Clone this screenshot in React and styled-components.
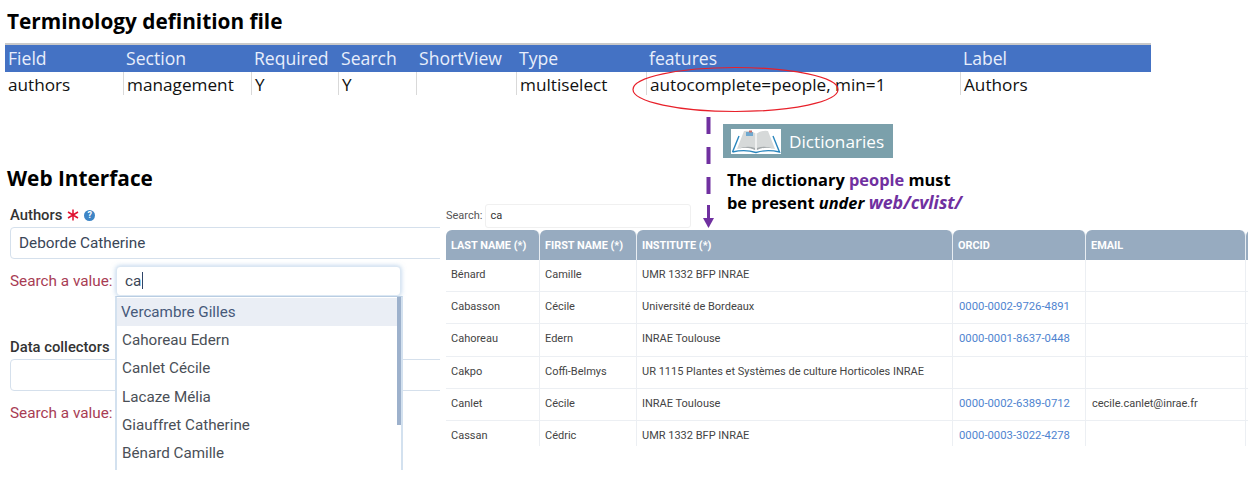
import styled, {createGlobalStyle} from "styled-components";

const GlobalStyle = createGlobalStyle`
    html, body {
        margin: 0;
        padding: 0;
        background: white;
    }
    * {
        box-sizing: border-box;
    }
`;

const Page = styled.div`
    position: relative;
    width: 1248px;
    height: 489px;
    overflow: hidden;
    background: white;
    font-family: Roboto, sans-serif;
`;

const SlideTitle = styled.h2`
    margin: 0;
    height: 43px;
    padding: 6px 0 0 7px;
    font-family: "Open Sans", sans-serif;
    font-size: 20.8px;
    line-height: 30px;
    font-weight: 700;
    color: black;
`;

const Sheet = styled.div`
    margin-left: 5px;
    width: 1146px;
    display: grid;
    grid-template-columns: 118px 128px 87px 78px 100px 130px 314px 191px;
`;

const HeadCell = styled.div`
    height: 29px;
    padding: 0 0 0 3px;
    border-top: 2px solid #c9c9c9;
    background: #4472c4;
    color: #e8eefb;
    font-family: "Open Sans", sans-serif;
    font-size: 17.6px;
    line-height: 26px;
    white-space: nowrap;
`;

const RowCell = styled.div`
    height: 23px;
    padding-left: 3px;
    border-left: ${(props) => (props.$first ? "none" : "1px solid #d9d9d9")};
    color: #111;
    font-family: "Open Sans", sans-serif;
    font-size: 17.2px;
    line-height: 26px;
    white-space: nowrap;
`;

const Lower = styled.div`
    margin-top: 70px;
    display: grid;
    grid-template-columns: 446px 1fr;
`;

const FormColumn = styled.div`
    width: 440px;
    height: 324px;
    padding-left: 7px;
    overflow: hidden;
`;

const SlideHeading = styled(SlideTitle)`
    height: 40px;
    padding: 0;
    margin-top: -2px;
    margin-bottom: 2px;
`;

const Field = styled.div`
    padding-left: 3px;
    margin-top: ${(props) => props.$top || 0}px;
`;

const FieldLabel = styled.div`
    display: flex;
    align-items: center;
    gap: 5px;
    height: 20px;
    margin-bottom: 2px;
    font-size: 14.8px;
    font-weight: 500;
    color: #333;
`;

const RequiredMark = styled.svg`
    width: 12px;
    height: 12px;
    flex: none;
`;

const HelpDot = styled.span`
    width: 11px;
    height: 11px;
    border-radius: 50%;
    background: #3d85c6;
    color: white;
    font-size: 9px;
    line-height: 11px;
    font-weight: 700;
    text-align: center;
`;

const ValueBox = styled.div`
    width: 450px;
    height: 32px;
    padding-left: 8px;
    border: 1px solid #d5e0ec;
    border-radius: 4px;
    color: #3a4657;
    font-size: 15.3px;
    line-height: 30px;
`;

const SearchRow = styled.div`
    position: relative;
    display: flex;
    align-items: center;
    height: 30px;
    margin-top: 7px;
    font-size: 15.3px;
    color: #a83c54;
`;

const SearchInput = styled.div`
    position: absolute;
    left: 106px;
    top: 0;
    width: 285px;
    height: 30px;
    padding-left: 8px;
    border: 1px solid #dbe7f3;
    border-radius: 4px;
    box-shadow: 0 0 5px rgba(120, 165, 215, 0.55);
    color: #3a4657;
    font-size: 15.3px;
    line-height: 29px;
    background: white;
    z-index: 2;
`;

const Caret = styled.span`
    display: inline-block;
    width: 1px;
    height: 17px;
    margin-left: 1px;
    vertical-align: -3px;
    background: #2f4468;
`;

const Dropdown = styled.ul`
    position: absolute;
    left: 105px;
    top: 30px;
    width: 288px;
    height: 174px;
    margin: 0;
    padding: 1px 0 0;
    list-style: none;
    overflow: hidden;
    background: white;
    border-left: 2px solid #d3e1ef;
    border-right: 2px solid #d3e1ef;
    border-top: 1px solid #b9cde2;
    z-index: 3;
`;

const Option = styled.li`
    height: 28.2px;
    padding-left: ${(props) => (props.$active ? "4px" : "5px")};
    background: ${(props) => (props.$active ? "#eaeef5" : "transparent")};
    color: ${(props) => (props.$active ? "#46597a" : "#4a4f57")};
    font-size: 15.2px;
    line-height: 28px;
`;

const ScrollThumb = styled.div`
    position: absolute;
    top: 0;
    right: 0;
    width: 4px;
    height: 128px;
    background: #9db1cc;
`;

const TableColumn = styled.div`
    padding-top: 36px;
    min-width: 0;
`;

const TableSearch = styled.div`
    display: flex;
    align-items: center;
    gap: 3px;
    height: 29px;
    font-size: 11px;
    color: #555;
`;

const TableSearchBox = styled.div`
    width: 206px;
    height: 24px;
    padding-left: 4px;
    border: 1px solid #f0f0f0;
    border-radius: 3px;
    color: #333;
    font-size: 11px;
    line-height: 22px;
`;

const TableClip = styled.div`
    height: 216px;
    overflow: hidden;
`;

const Table = styled.table`
    width: 880px;
    table-layout: fixed;
    border-collapse: separate;
    border-spacing: 0;
    font-size: 11px;
`;

const Th = styled.th`
    height: 30px;
    padding: 0 5px;
    background: #97abc0;
    border-right: 1px solid #e8edf2;
    border-radius: 6px 6px 0 0;
    color: white;
    font-size: 10.9px;
    font-weight: 700;
    text-align: left;
    white-space: nowrap;
`;

const Td = styled.td`
    height: 32.2px;
    padding: 0 5px 2px;
    border-right: 1px solid #eceff3;
    border-bottom: 1px solid #eceff3;
    color: #444;
    white-space: nowrap;
`;

const Orcid = styled.span`
    margin-left: 1px;
    color: #4f84d0;
    font-size: 11.3px;
`;

const Email = styled.span`
    margin-left: 1px;
`;

const Annotation = styled.svg`
    position: absolute;
    left: 0;
    top: 0;
    pointer-events: none;
    z-index: 4;
`;

const Callout = styled.div`
    position: absolute;
    left: 723px;
    top: 124px;
    z-index: 4;
`;

const Banner = styled.div`
    display: flex;
    align-items: center;
    gap: 8px;
    width: 170px;
    height: 34px;
    padding-left: 8px;
    background: #7ba0ab;
    color: white;
    font-family: "Open Sans", sans-serif;
    font-size: 17.2px;
`;

const BookTile = styled.svg`
    width: 50px;
    height: 25px;
    background: white;
`;

const Note = styled.div`
    margin: 10px 0 0 4px;
    font-family: "Open Sans", sans-serif;
    font-size: 16.4px;
    line-height: 23px;
    font-weight: 700;
    color: black;
    white-space: nowrap;
`;

const Purple = styled.span`
    color: #7030a0;
`;

const PurplePath = styled(Purple)`
    font-size: 17.8px;
    font-style: italic;
`;

const sheetHead = ["Field", "Section", "Required", "Search", "ShortView", "Type", "features", "Label"];
const sheetRow = ["authors", "management", "Y", "Y", "", "multiselect", "autocomplete=people, min=1", "Authors"];

const people = ["Vercambre Gilles", "Cahoreau Edern", "Canlet Cécile", "Lacaze Mélia", "Giauffret Catherine", "Bénard Camille"];

const columns = [94, 97, 316, 133, 160, 80];
const tableHead = ["LAST NAME (*)", "FIRST NAME (*)", "INSTITUTE (*)", "ORCID", "EMAIL", ""];
const tableRows = [
    ["Bénard", "Camille", "UMR 1332 BFP INRAE", "", ""],
    ["Cabasson", "Cécile", "Université de Bordeaux", "0000-0002-9726-4891", ""],
    ["Cahoreau", "Edern", "INRAE Toulouse", "0000-0001-8637-0448", ""],
    ["Cakpo", "Coffi-Belmys", "UR 1115 Plantes et Systèmes de culture Horticoles INRAE", "", ""],
    ["Canlet", "Cécile", "INRAE Toulouse", "0000-0002-6389-0712", "cecile.canlet@inrae.fr"],
    ["Cassan", "Cédric", "UMR 1332 BFP INRAE", "0000-0003-3022-4278", ""],
];

function BookIcon() {
    return (
        <BookTile viewBox="0 0 50 25">
            <path d="M1.5 23 L8 7 M1.5 23 Q14 20 25 23.5 Q36 20 48.5 23 L42 7" fill="none" stroke="#2a86bd" strokeWidth="1.4"/>
            <path d="M6 20 L13 2 Q20 1 25 5 Q30 1 37 2 L44 20 Q34 17 25 21 Q16 17 6 20Z" fill="#d6d9d9"/>
            <path d="M7 20 Q16 16 24 19 V21 Q16 17 7 20Z" fill="#a4a9ab"/>
            <path d="M43 20 Q34 16 26 19 V21 Q34 17 43 20Z" fill="#a4a9ab"/>
            <rect x="15" y="3" width="7" height="4" fill="#6fa8cf"/>
            <rect x="18" y="1.5" width="3" height="2" fill="#c9706a"/>
            <path d="M25 5 V21" stroke="#f7f7f7" strokeWidth="1.5"/>
        </BookTile>
    );
}

function App() {
    return (
        <Page>
            <GlobalStyle/>
            <SlideTitle>Terminology definition file</SlideTitle>
            <Sheet>
                {sheetHead.map((label) => (
                    <HeadCell key={label}>{label}</HeadCell>
                ))}
                {sheetRow.map((value, i) => (
                    <RowCell key={i} $first={i === 0}>{value}</RowCell>
                ))}
            </Sheet>

            <Lower>
                <FormColumn>
                    <SlideHeading>Web Interface</SlideHeading>
                    <Field>
                        <FieldLabel>
                            Authors
                            <RequiredMark viewBox="0 0 12 12">
                                <path d="M6 0.5 V11.5 M1 3 L11 9 M11 3 L1 9" stroke="#e0102f" strokeWidth="1.5"/>
                            </RequiredMark>
                            <HelpDot>?</HelpDot>
                        </FieldLabel>
                        <ValueBox>Deborde Catherine</ValueBox>
                        <SearchRow>
                            Search a value:
                            <SearchInput>ca<Caret/></SearchInput>
                            <Dropdown>
                                {people.map((name, i) => (
                                    <Option key={name} $active={i === 0}>{name}</Option>
                                ))}
                                <ScrollThumb/>
                            </Dropdown>
                        </SearchRow>
                    </Field>
                    <Field $top={41}>
                        <FieldLabel>Data collectors</FieldLabel>
                        <ValueBox/>
                        <SearchRow>Search a value:</SearchRow>
                    </Field>
                </FormColumn>

                <TableColumn>
                    <TableSearch>
                        Search:
                        <TableSearchBox>ca</TableSearchBox>
                    </TableSearch>
                    <TableClip>
                        <Table>
                            <colgroup>
                                {columns.map((w, i) => (
                                    <col key={i} width={w}/>
                                ))}
                            </colgroup>
                            <thead>
                                <tr>
                                    {tableHead.map((label, i) => (
                                        <Th key={i}>{label}</Th>
                                    ))}
                                </tr>
                            </thead>
                            <tbody>
                                {tableRows.map((row) => (
                                    <tr key={row[0]}>
                                        <Td>{row[0]}</Td>
                                        <Td>{row[1]}</Td>
                                        <Td>{row[2]}</Td>
                                        <Td><Orcid>{row[3]}</Orcid></Td>
                                        <Td><Email>{row[4]}</Email></Td>
                                        <Td/>
                                    </tr>
                                ))}
                            </tbody>
                        </Table>
                    </TableClip>
                </TableColumn>
            </Lower>

            <Annotation width="1248" height="489" viewBox="0 0 1248 489">
                <ellipse cx="735.5" cy="89.5" rx="102.5" ry="22" fill="none" stroke="#e8202a" strokeWidth="1.2"/>
                <path d="M708.5 117 V198" stroke="#7030a0" strokeWidth="4" strokeDasharray="17 13" fill="none"/>
                <path d="M708.5 205 V220" stroke="#7030a0" strokeWidth="3" fill="none"/>
                <path d="M703 218 H714 L708.5 228Z" fill="#7030a0"/>
            </Annotation>

            <Callout>
                <Banner>
                    <BookIcon/>
                    Dictionaries
                </Banner>
                <Note>
                    The dictionary <Purple>people</Purple> must<br/>
                    be present <em>under</em> <PurplePath>web/cvlist/</PurplePath>
                </Note>
            </Callout>
        </Page>
    );
}

export default App;
